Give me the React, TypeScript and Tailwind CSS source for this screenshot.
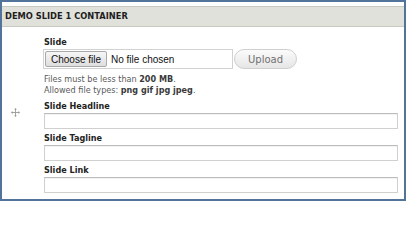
import React from 'react';

const fieldLabel = "font-['DejaVu_Sans',sans-serif] font-bold text-[8.1px] leading-[13px] text-[#222]";

function TextField({ label, first = false }: { label: string; first?: boolean }) {
  return (
    <div className={first ? '' : 'mt-[3px]'}>
      <div className={fieldLabel}>{label}</div>
      <div className="h-[16px] w-[354px] border border-[#d0d0d0] border-t-[#bcbcbc] bg-white shadow-[inset_0_1px_1px_rgba(0,0,0,0.06)]" />
    </div>
  );
}

function DragHandle() {
  return (
    <svg width="9" height="9" viewBox="0 0 9 9" className="text-[#9a9a9a]">
      <g fill="none" stroke="currentColor" strokeWidth="0.9">
        <path d="M4.5 0.8V8.2M0.8 4.5H8.2" />
      </g>
      <g fill="currentColor">
        <path d="M4.5 0L3.1 1.6H5.9Z" />
        <path d="M4.5 9L3.1 7.4H5.9Z" />
        <path d="M0 4.5L1.6 3.1V5.9Z" />
        <path d="M9 4.5L7.4 3.1V5.9Z" />
      </g>
    </svg>
  );
}

export default function App() {
  return (
    <div className="w-[406px] h-[201px] border-2 border-[#52749b] bg-white overflow-hidden">
      <div className="mt-[4px] h-[21px] border-y border-[#c9c9c2] bg-[#e1e1db] flex items-center pl-[3px] pr-px">
        <span className="font-['DejaVu_Sans',sans-serif] font-bold text-[8.3px] text-[#1e1e1e]">
          DEMO SLIDE 1 CONTAINER
        </span>
      </div>
      <div className="flex h-[172px]">
        <div className="w-[42px] flex items-center pl-[9px] pb-[1px]">
          <DragHandle />
        </div>
        <div className="flex-1 pt-[9px]">
          <div className={fieldLabel}>Slide</div>
          <div className="flex items-center">
            <div className="h-[20px] w-[190px] border border-[#d2d2d2] bg-white flex items-center pl-px -ml-px">
              <div className="h-[16px] px-[5px] flex items-center rounded-[2px] border border-[#a9a9a9] bg-gradient-to-b from-[#f6f6f6] to-[#dedede] font-['Liberation_Sans',sans-serif] text-[10px] text-[#111]">
                Choose file
              </div>
              <span className="ml-[4px] font-['Liberation_Sans',sans-serif] text-[10px] text-[#111]">No file chosen</span>
            </div>
            <div className="ml-px h-[20px] w-[63px] rounded-full border border-[#cfcfcf] bg-gradient-to-b from-[#fbfbfb] to-[#e6e6e6] flex items-center justify-center font-['DejaVu_Sans',sans-serif] text-[10px] text-[#707070]">
              Upload
            </div>
          </div>
          <div className="mt-[5px] font-['DejaVu_Sans',sans-serif] text-[8.1px] leading-[10.5px] text-[#5a5a5a]">
            <div>
              Files must be less than <span className="font-bold text-[#3a3a3a]">200 MB</span>.
            </div>
            <div>
              Allowed file types: <span className="font-bold text-[#3a3a3a]">png gif jpg jpeg</span>.
            </div>
          </div>
          <div className="mt-[5px]">
            <TextField label="Slide Headline" first />
            <TextField label="Slide Tagline" />
            <TextField label="Slide Link" />
          </div>
        </div>
      </div>
    </div>
  );
}
